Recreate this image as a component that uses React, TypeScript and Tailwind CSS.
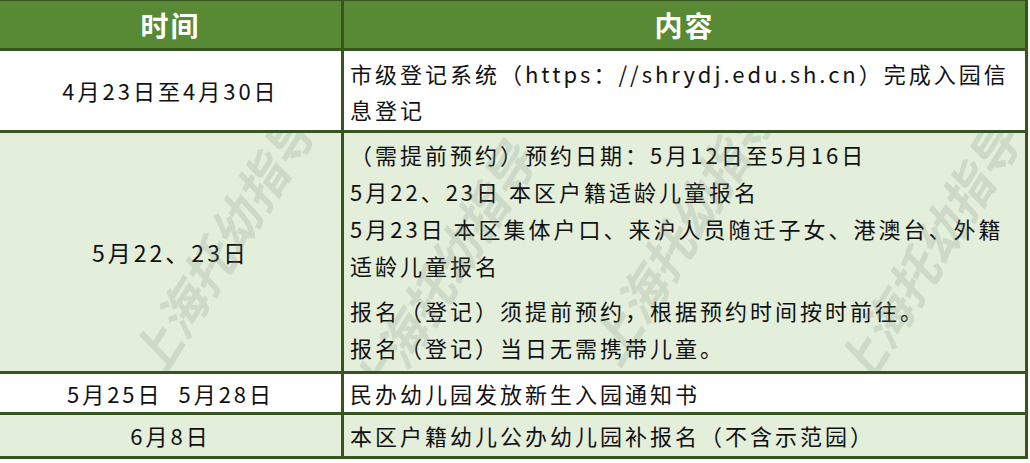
const font = { fontFamily: '"Noto Sans CJK SC", "Noto Sans", sans-serif' };

const rows = [
  {
    time: "4月23日至4月30日",
    lines: ["市级登记系统（https：//shrydj.edu.sh.cn）完成入园信", "息登记"],
    h: "h-[79px]",
    bg: "bg-white",
  },
];

function Watermark({ className }: { className: string }) {
  return (
    <span
      aria-hidden="true"
      className={`pointer-events-none absolute select-none whitespace-nowrap text-[50px] font-bold italic tracking-[0px] text-[#7f8b7c]/20 -rotate-[58deg] ${className}`}
    >
      上海托幼指导
    </span>
  );
}

export default function App() {
  return (
    <div className="h-[463px] w-[1030px] bg-white text-[22px] tracking-[3px] text-[#111111]" style={font}>
      <div className="w-[1028px] border-r-[3px] border-[#37551f]">
        {/* header */}
        <div className="flex h-[51px] border-b-[3px] border-t border-[#37551f] bg-[#588a35] font-bold text-white">
          <div className="flex w-[344px] items-center justify-center border-r-[3px] border-[#37551f] text-[28px] tracking-[2px]">
            时间
          </div>
          <div className="flex flex-1 items-center justify-center text-[28px] tracking-[2px]">内容</div>
        </div>

        {rows.map((r) => (
          <div key={r.time} className={`flex border-b-[3px] border-[#37551f] ${r.bg}`}>
            <div className={`flex w-[344px] items-center justify-center border-r-[3px] border-[#37551f] ${r.h}`}>
              {r.time}
            </div>
            <div className="flex flex-1 flex-col justify-center pl-[6px] leading-[36px]">
              {r.lines.map((l) => (
                <div key={l} className="whitespace-nowrap">{l}</div>
              ))}
            </div>
          </div>
        ))}

        {/* big row with watermark */}
        <div className="relative flex h-[241px] overflow-hidden border-b-[3px] border-[#37551f] bg-[#e3eedb]">
          <div className="flex w-[344px] items-center justify-center border-r-[3px] border-[#37551f] text-[23px]">
            5月22、23日
          </div>
          <div className="flex flex-1 flex-col pl-[6px] pt-[3px] leading-[37px]">
            <div className="whitespace-nowrap">（需提前预约）预约日期：5月12日至5月16日</div>
            <div className="whitespace-nowrap">5月22、23日 本区户籍适龄儿童报名</div>
            <div className="whitespace-nowrap">5月23日 本区集体户口、来沪人员随迁子女、港澳台、外籍</div>
            <div className="whitespace-nowrap">适龄儿童报名</div>
            <div className="mt-[8px] whitespace-nowrap">报名（登记）须提前预约，根据预约时间按时前往。</div>
            <div className="whitespace-nowrap">报名（登记）当日无需携带儿童。</div>
          </div>
          <Watermark className="left-[70px] top-[75px]" />
          <Watermark className="left-[290px] top-[105px]" />
          <Watermark className="left-[530px] top-[60px]" />
          <Watermark className="left-[775px] top-[85px]" />
          <Watermark className="left-[-160px] top-[-115px]" />
        </div>

        <div className="flex h-[41px] border-b-[3px] border-[#37551f] bg-white">
          <div className="flex w-[344px] items-center justify-center border-r-[3px] border-[#37551f]">
            5月25日&nbsp;&nbsp;5月28日
          </div>
          <div className="flex flex-1 items-center pl-[6px]">民办幼儿园发放新生入园通知书</div>
        </div>

        <div className="flex h-[44px] border-b-[3px] border-[#37551f] bg-[#e3eedb]">
          <div className="flex w-[344px] items-center justify-center border-r-[3px] border-[#37551f]">6月8日</div>
          <div className="flex flex-1 items-center pl-[6px]">本区户籍幼儿公办幼儿园补报名（不含示范园）</div>
        </div>
      </div>
    </div>
  );
}
